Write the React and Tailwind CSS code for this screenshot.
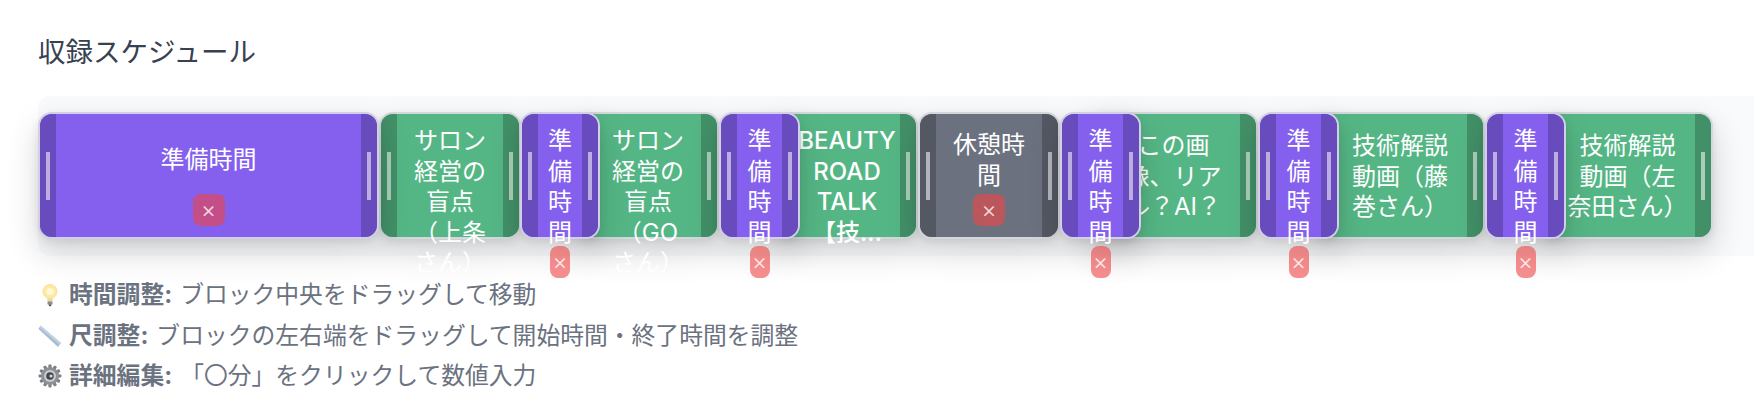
const PREP = { fill: "bg-[#8560ee]", handle: "bg-[#684cbd]", border: "border-[#d2cfe6]", z: "z-10" };
const GREEN = { fill: "bg-[#55b685]", handle: "bg-[#429068]", border: "border-[#d4d8dd]", z: "z-0" };
const GRAY = { fill: "bg-[#6c7180]", handle: "bg-[#545863]", border: "border-[#d4d6dc]", z: "z-0" };

const prepLines = ["準", "備", "時", "間"];

const blocks = [
  { kind: PREP, pos: "left-[0px] w-[341px]", pad: "pt-[31px]", lines: ["準備時間"], del: "wide" },
  { kind: GREEN, pos: "left-[341px] w-[142px]", pad: "pt-[12px]", lines: ["サロン", "経営の", "盲点", "（上条", "さん）"] },
  { kind: PREP, pos: "left-[482px] w-[80px]", pad: "pt-[12px]", lines: prepLines, del: "narrow" },
  { kind: GREEN, pos: "left-[539px] w-[142px]", pad: "pt-[12px]", lines: ["サロン", "経営の", "盲点", "（GO", "さん）"] },
  { kind: PREP, pos: "left-[681px] w-[81px]", pad: "pt-[12px]", lines: prepLines, del: "narrow" },
  { kind: GREEN, pos: "left-[738px] w-[142px]", pad: "pt-[12px]", lines: ["BEAUTY", "ROAD", "TALK", "【技..."], strong: true },
  { kind: GRAY, pos: "left-[880px] w-[142px]", pad: "pt-[16px]", lines: ["休憩時", "間"], del: "wide" },
  { kind: PREP, pos: "left-[1022px] w-[81px]", pad: "pt-[12px]", lines: prepLines, del: "narrow" },
  { kind: GREEN, pos: "left-[1051px] w-[169px]", pad: "pt-[17px]", lines: ["この画", "像、リア", "ル？AI？"] },
  { kind: PREP, pos: "left-[1220px] w-[81px]", pad: "pt-[12px]", lines: prepLines, del: "narrow" },
  { kind: GREEN, pos: "left-[1277px] w-[170px]", pad: "pt-[17px]", lines: ["技術解説", "動画（藤", "巻さん）"] },
  { kind: PREP, pos: "left-[1447px] w-[81px]", pad: "pt-[12px]", lines: prepLines, del: "narrow" },
  { kind: GREEN, pos: "left-[1504px] w-[171px]", pad: "pt-[17px]", lines: ["技術解説", "動画（左", "奈田さん）"] },
];

function Handle({ side, color }) {
  const round = side === "l" ? "rounded-l-[12px]" : "rounded-r-[12px]";
  return (
    <div className={`flex h-full w-[16px] shrink-0 items-center justify-center ${color} ${round}`}>
      <div className="h-[48px] w-[4px] bg-white/55" />
    </div>
  );
}

function Del({ type }) {
  const cls = type === "wide" ? "top-[80px] w-[32px]" : "top-[132px] w-[20px]";
  return (
    <div
      className={`absolute left-1/2 z-20 flex h-[32px] -translate-x-1/2 items-center justify-center rounded-[8px] bg-[#ef4444]/60 text-[23px] font-light leading-none text-white/80 ${cls}`}
    >
      ×
    </div>
  );
}

function Block({ b }) {
  const { kind } = b;
  return (
    <div
      className={`absolute top-[16px] flex h-[127px] rounded-[14px] border-2 shadow-[0_14px_32px_rgba(0,0,0,0.16),0_3px_8px_rgba(0,0,0,0.08)] ${b.pos} ${kind.fill} ${kind.border} ${kind.z}`}
    >
      <Handle side="l" color={kind.handle} />
      <div className={`flex min-w-0 flex-1 flex-col items-center ${b.pad}`}>
        {b.lines.map((l, i) => (
          <div
            key={i}
            className={`whitespace-nowrap text-[24px] leading-[30.5px] text-white ${b.strong ? "font-medium" : "font-normal"}`}
          >
            {l}
          </div>
        ))}
      </div>
      <Handle side="r" color={kind.handle} />
      {b.del && <Del type={b.del} />}
    </div>
  );
}

function Bulb() {
  return (
    <svg viewBox="0 0 24 24" className="h-[24px] w-[24px]">
      <circle cx="12" cy="8.5" r="7" fill="#fdeaa0" stroke="#f5d98a" strokeWidth="0.8" />
      <circle cx="12" cy="8.5" r="3.6" fill="#fff8d8" />
      <path d="M9 15.5h6l-.6 3.5h-4.8z" fill="#e8d9a0" />
      <rect x="9.5" y="18.6" width="5" height="3.2" rx="1" fill="#8b8b8b" />
      <rect x="10.8" y="21.6" width="2.4" height="1.6" rx="0.7" fill="#4b4b4b" />
    </svg>
  );
}

function Ruler() {
  return (
    <svg viewBox="0 0 24 24" className="h-[24px] w-[24px]">
      <path d="M2.5 1.5 L23 19 L20 23 L0.5 5 Z" fill="#a9bdd4" />
      <path d="M2.5 1.5 L23 19 L21.8 20.5 L1.5 3.2 Z" fill="#c4d3e3" />
    </svg>
  );
}

function Gear() {
  const teeth = [0, 30, 60, 90, 120, 150, 180, 210, 240, 270, 300, 330];
  return (
    <svg viewBox="0 0 24 24" className="h-[24px] w-[24px]">
      {teeth.map((a) => (
        <rect key={a} x="10.4" y="0.6" width="3.2" height="5" rx="0.8" fill="#7b7f85" transform={`rotate(${a} 12 12)`} />
      ))}
      <circle cx="12" cy="12" r="9" fill="#8d9197" />
      <circle cx="12" cy="12" r="6" fill="#c9ccd0" />
      <circle cx="12" cy="12" r="3.8" fill="#43464b" />
      <circle cx="13" cy="12" r="1.6" fill="#d8dadd" />
    </svg>
  );
}

function Tip({ icon, label, text }) {
  return (
    <div className="flex h-[40.5px] items-center text-[23.8px] text-[#6b7280]">
      <span className="mr-[7px] flex w-[24px] shrink-0 items-center justify-center">{icon}</span>
      <span className="font-bold">{label}</span>
      <span className="ml-[8px]">{text}</span>
    </div>
  );
}

export default function App() {
  return (
    <div className="h-[404px] w-[1754px] overflow-hidden bg-white pl-[38px] font-['Inter','Noto_Sans_CJK_JP',sans-serif]">
      <h1 className="pt-[32px] text-[27.5px] font-normal leading-[40px] text-[#374151]">収録スケジュール</h1>
      <div className="relative mt-[24px] h-[160px] rounded-l-[12px] bg-[#f9fafb]">
        {blocks.map((b, i) => (
          <Block key={i} b={b} />
        ))}
      </div>
      <div className="mt-[19px]">
        <Tip icon={<Bulb />} label="時間調整:" text="ブロック中央をドラッグして移動" />
        <Tip icon={<Ruler />} label="尺調整:" text="ブロックの左右端をドラッグして開始時間・終了時間を調整" />
        <Tip icon={<Gear />} label="詳細編集:" text="「〇分」をクリックして数値入力" />
      </div>
    </div>
  );
}
